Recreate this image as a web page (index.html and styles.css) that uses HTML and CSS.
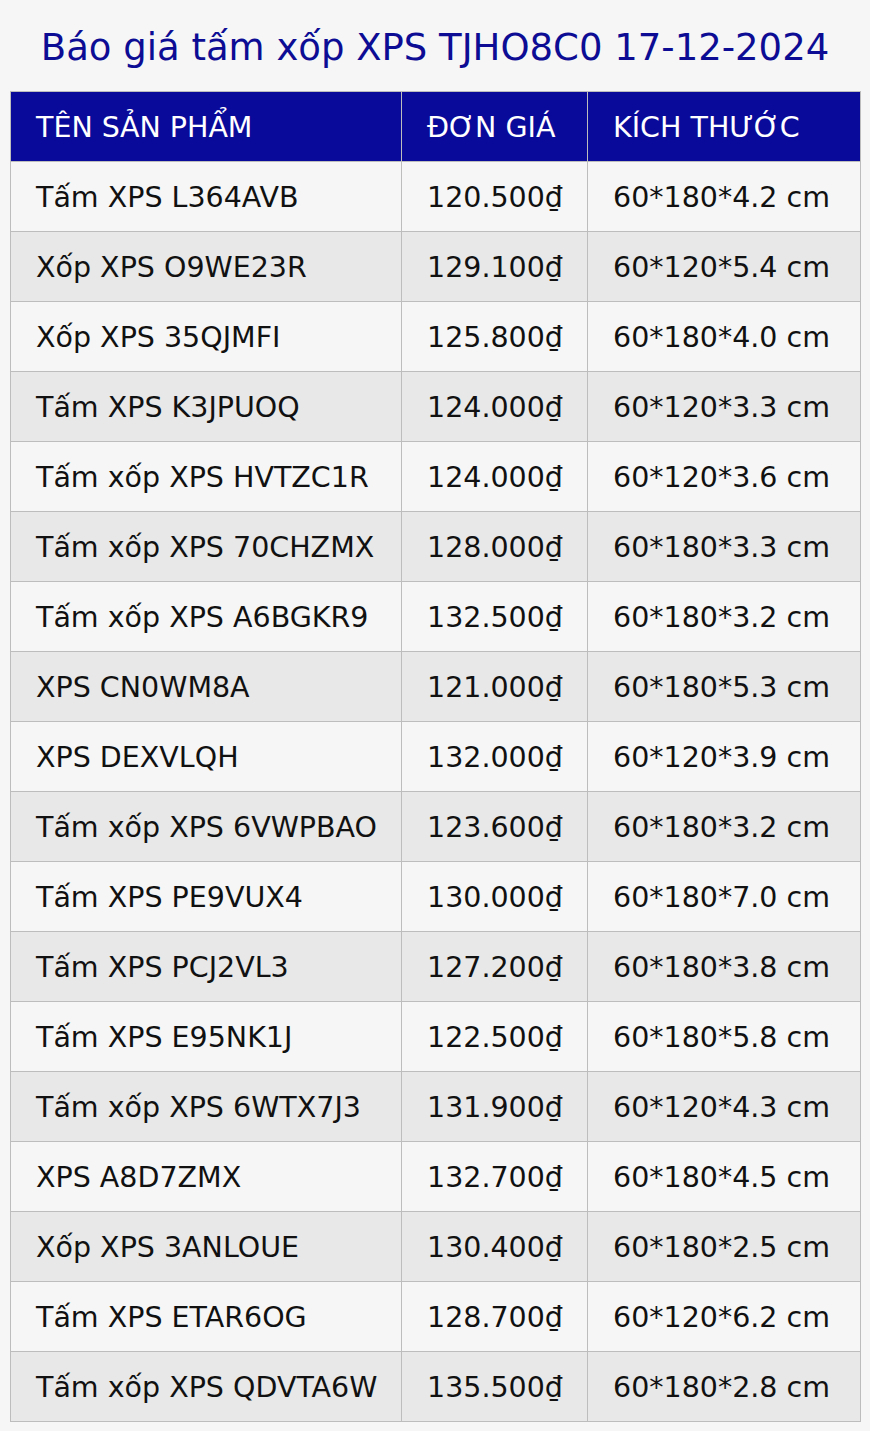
FILE: index.html
```html
<!DOCTYPE html>
<html lang="vi">
<head>
<meta charset="utf-8">
<link rel="stylesheet" href="styles.css">
</head>
<body>
<h1 class="title">Báo giá tấm xốp XPS TJHO8C0 17-12-2024</h1>
<table class="price-table">
<colgroup><col class="c1"><col class="c2"><col class="c3"></colgroup>
<thead>
<tr><th>TÊN SẢN PHẨM</th><th>ĐƠN GIÁ</th><th>KÍCH THƯỚC</th></tr>
</thead>
<tbody>
<tr><td>Tấm XPS L364AVB</td><td>120.500₫</td><td>60*180*4.2 cm</td></tr>
<tr><td>Xốp XPS O9WE23R</td><td>129.100₫</td><td>60*120*5.4 cm</td></tr>
<tr><td>Xốp XPS 35QJMFI</td><td>125.800₫</td><td>60*180*4.0 cm</td></tr>
<tr><td>Tấm XPS K3JPUOQ</td><td>124.000₫</td><td>60*120*3.3 cm</td></tr>
<tr><td>Tấm xốp XPS HVTZC1R</td><td>124.000₫</td><td>60*120*3.6 cm</td></tr>
<tr><td>Tấm xốp XPS 70CHZMX</td><td>128.000₫</td><td>60*180*3.3 cm</td></tr>
<tr><td>Tấm xốp XPS A6BGKR9</td><td>132.500₫</td><td>60*180*3.2 cm</td></tr>
<tr><td>XPS CN0WM8A</td><td>121.000₫</td><td>60*180*5.3 cm</td></tr>
<tr><td>XPS DEXVLQH</td><td>132.000₫</td><td>60*120*3.9 cm</td></tr>
<tr><td>Tấm xốp XPS 6VWPBAO</td><td>123.600₫</td><td>60*180*3.2 cm</td></tr>
<tr><td>Tấm XPS PE9VUX4</td><td>130.000₫</td><td>60*180*7.0 cm</td></tr>
<tr><td>Tấm XPS PCJ2VL3</td><td>127.200₫</td><td>60*180*3.8 cm</td></tr>
<tr><td>Tấm XPS E95NK1J</td><td>122.500₫</td><td>60*180*5.8 cm</td></tr>
<tr><td>Tấm xốp XPS 6WTX7J3</td><td>131.900₫</td><td>60*120*4.3 cm</td></tr>
<tr><td>XPS A8D7ZMX</td><td>132.700₫</td><td>60*180*4.5 cm</td></tr>
<tr><td>Xốp XPS 3ANLOUE</td><td>130.400₫</td><td>60*180*2.5 cm</td></tr>
<tr><td>Tấm XPS ETAR6OG</td><td>128.700₫</td><td>60*120*6.2 cm</td></tr>
<tr><td>Tấm xốp XPS QDVTA6W</td><td>135.500₫</td><td>60*180*2.8 cm</td></tr>
</tbody>
</table>
</body>
</html>
```
FILE: styles.css
```css
html, body {
  margin: 0;
  padding: 0;
  background: #f6f6f6;
}
body {
  padding: 0 10px 10px 10px;
  font-family: "DejaVu Sans", sans-serif;
}
.title {
  margin: 0;
  height: 91px;
  line-height: 95px;
  text-align: center;
  font-weight: normal;
  font-size: 37px;
  color: #0c0c94;
}
.price-table {
  width: 850px;
  border-collapse: collapse;
  table-layout: fixed;
  font-size: 28.5px;
}
.c1 { width: 391px; }
.c2 { width: 186px; }
.c3 { width: 273px; }
.price-table th,
.price-table td {
  border: 1px solid #bdbdbd;
  height: 70px;
  padding: 2px 0 0 25px;
  text-align: left;
  white-space: nowrap;
  box-sizing: border-box;
}
.price-table th {
  background: #0a0a9a;
  color: #ffffff;
  font-weight: normal;
}
.price-table td {
  color: #111111;
}
.price-table tbody tr:nth-child(odd) td {
  background: #f6f6f6;
}
.price-table tbody tr:nth-child(even) td {
  background: #e8e8e8;
}
```
